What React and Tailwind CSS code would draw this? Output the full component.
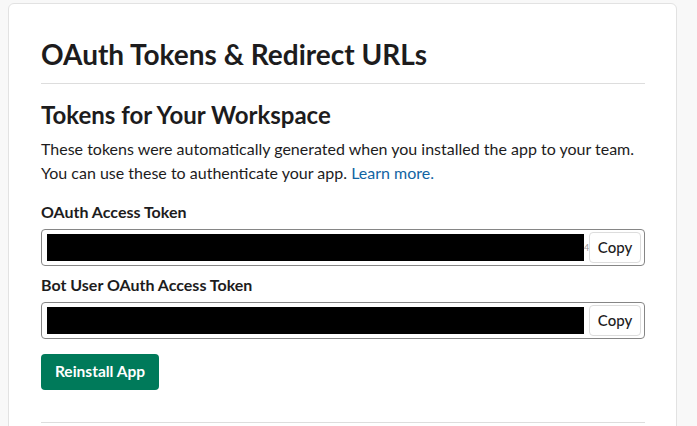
import React from 'react';

const TokenField = ({ label, tail, top }) => (
    <div className={top}>
        <div className="text-[16px] font-bold leading-[22px] text-[#1d1c1d]">{label}</div>
        <div className="mt-[6px] flex h-[37px] w-[604px] items-center rounded-[4px] border border-[#868686] pl-[5px] pr-[3px]">
            <div className="h-[27px] w-[538px] bg-black" />
            <div className="w-[4px] text-[9px] leading-none text-[#999]">{tail}</div>
            <button className="ml-[1px] h-[31px] w-[52px] rounded-[4px] border border-[#dddddd] bg-white text-[15px] font-medium text-[#1d1c1d]">
                Copy
            </button>
        </div>
    </div>
);

export default function App() {
    return (
        <div className="h-[426px] overflow-hidden bg-[#f8f8f8] pl-[8px] pr-[20px] pt-[3px] font-['Lato','Noto_Sans',sans-serif]">
            <div className="h-[440px] rounded-[6px] border border-[#e2e2e2] bg-white pl-[32px] pr-[31px] pt-[32px]">
                <h1 className="text-[28px] font-bold leading-[36px] text-[#1d1c1d]">OAuth Tokens &amp; Redirect URLs</h1>
                <div className="mt-[11px] h-px w-[604px] bg-[#dddddd]" />
                <h2 className="mt-[16px] text-[24px] font-bold leading-[30px] text-[#1d1c1d]">Tokens for Your Workspace</h2>
                <p className="mt-[7px] text-[16px] leading-[24px] text-[#1d1c1d]">
                    These tokens were automatically generated when you installed the app to your team.
                    <br />
                    You can use these to authenticate your app.{' '}
                    <a className="text-[#1264a3]">Learn more.</a>
                </p>
                <TokenField top="mt-[16px]" label="OAuth Access Token" tail="4" />
                <TokenField top="mt-[8px]" label="Bot User OAuth Access Token" tail="" />
                <button className="mt-[15px] h-[36px] w-[118px] rounded-[4px] bg-[#007a5a] text-[15.5px] font-bold text-white">
                    Reinstall App
                </button>
                <div className="mt-[32px] h-px w-[604px] bg-[#dddddd]" />
            </div>
        </div>
    );
}
